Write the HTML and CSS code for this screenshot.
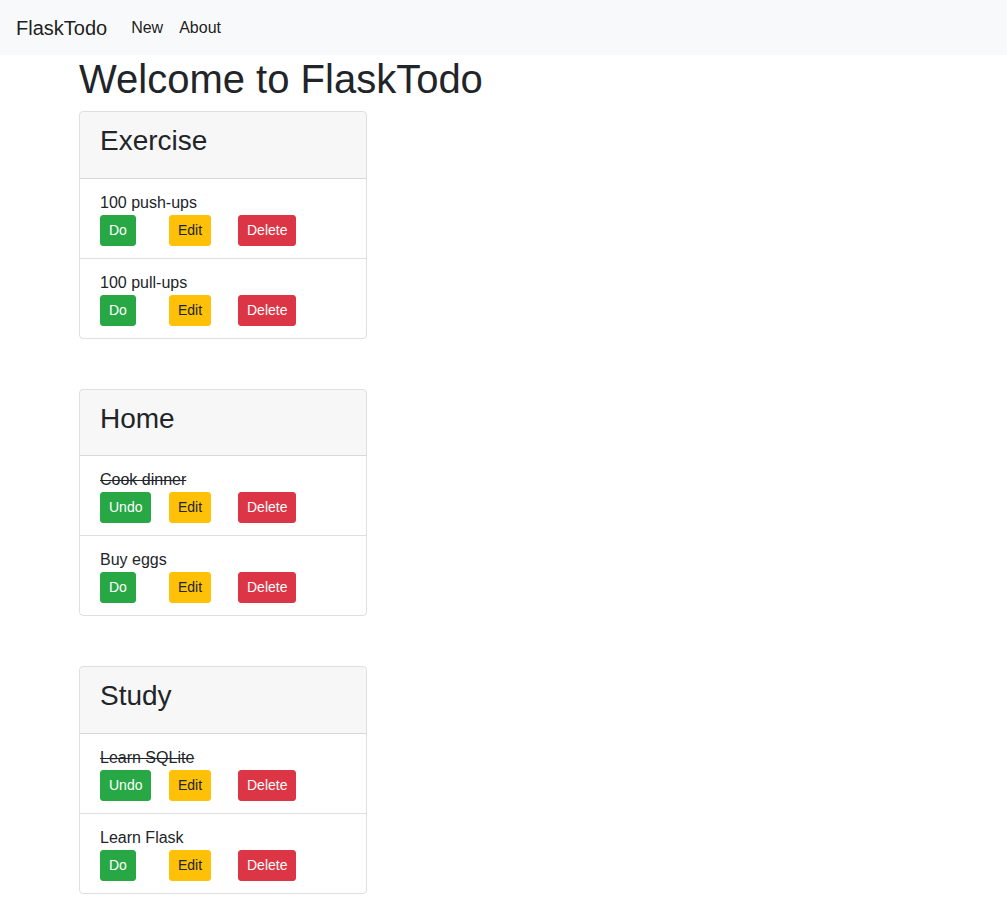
FILE: index.html
```html
<!DOCTYPE html>
<html lang="en">
<head>
<meta charset="utf-8">
<title>FlaskTodo</title>
<link rel="stylesheet" href="styles.css">
</head>
<body>
<nav class="navbar">
  <a class="brand" href="#">FlaskTodo</a>
  <a class="nav-link" href="#">New</a>
  <a class="nav-link" href="#">About</a>
</nav>
<main class="content">
  <h1 class="title">Welcome to FlaskTodo</h1>

  <section class="card">
    <div class="card-header"><h3>Exercise</h3></div>
    <ul class="list">
      <li class="item">
        <div class="task">100 push-ups</div>
        <div class="actions">
          <span class="slot"><button class="btn btn-success">Do</button></span>
          <span class="slot"><button class="btn btn-warning">Edit</button></span>
          <span class="slot"><button class="btn btn-danger">Delete</button></span>
        </div>
      </li>
      <li class="item">
        <div class="task">100 pull-ups</div>
        <div class="actions">
          <span class="slot"><button class="btn btn-success">Do</button></span>
          <span class="slot"><button class="btn btn-warning">Edit</button></span>
          <span class="slot"><button class="btn btn-danger">Delete</button></span>
        </div>
      </li>
    </ul>
  </section>

  <section class="card">
    <div class="card-header"><h3>Home</h3></div>
    <ul class="list">
      <li class="item">
        <div class="task"><s>Cook dinner</s></div>
        <div class="actions">
          <span class="slot"><button class="btn btn-success">Undo</button></span>
          <span class="slot"><button class="btn btn-warning">Edit</button></span>
          <span class="slot"><button class="btn btn-danger">Delete</button></span>
        </div>
      </li>
      <li class="item">
        <div class="task">Buy eggs</div>
        <div class="actions">
          <span class="slot"><button class="btn btn-success">Do</button></span>
          <span class="slot"><button class="btn btn-warning">Edit</button></span>
          <span class="slot"><button class="btn btn-danger">Delete</button></span>
        </div>
      </li>
    </ul>
  </section>

  <section class="card">
    <div class="card-header"><h3>Study</h3></div>
    <ul class="list">
      <li class="item">
        <div class="task"><s>Learn SQLite</s></div>
        <div class="actions">
          <span class="slot"><button class="btn btn-success">Undo</button></span>
          <span class="slot"><button class="btn btn-warning">Edit</button></span>
          <span class="slot"><button class="btn btn-danger">Delete</button></span>
        </div>
      </li>
      <li class="item">
        <div class="task">Learn Flask</div>
        <div class="actions">
          <span class="slot"><button class="btn btn-success">Do</button></span>
          <span class="slot"><button class="btn btn-warning">Edit</button></span>
          <span class="slot"><button class="btn btn-danger">Delete</button></span>
        </div>
      </li>
    </ul>
  </section>
</main>
</body>
</html>
```

FILE: styles.css
```css
* { box-sizing: border-box; }
html, body {
  margin: 0;
  padding: 0;
  background: #fff;
  color: #212529;
  font-family: "Liberation Sans", Arial, Helvetica, sans-serif;
  font-size: 16px;
  line-height: 1.5;
}
a { text-decoration: none; }

.navbar {
  display: flex;
  align-items: center;
  height: 55px;
  padding: 0 16px;
  background: #f8f9fa;
}
.brand {
  font-size: 20px;
  line-height: 30px;
  color: rgba(0,0,0,.9);
  margin-right: 16px;
}
.nav-link {
  padding: 0 8px;
  color: rgba(0,0,0,.9);
  font-size: 16px;
  line-height: 24px;
}

.content {
  padding-left: 79px;
  padding-bottom: 20px;
}
.title {
  margin: 0 0 8px 0;
  font-size: 40px;
  line-height: 48px;
  font-weight: 400;
}

.card {
  width: 288px;
  border: 1px solid rgba(0,0,0,.125);
  border-radius: 4px;
  margin-bottom: 50px;
  overflow: hidden;
}
.card-header {
  background: rgba(0,0,0,.03);
  padding: 12px 20px;
  border-bottom: 1px solid rgba(0,0,0,.125);
}
.card-header h3 {
  margin: 0 0 8px 0;
  font-size: 28px;
  line-height: 33.6px;
  font-weight: 400;
}
.list {
  list-style: none;
  margin: 0;
  padding: 0;
}
.item {
  padding: 12px 20px;
  border-top: 1px solid rgba(0,0,0,.125);
}
.item:first-child { border-top: 0; }
.task s { text-decoration: line-through; }

.actions {
  display: flex;
}
.slot {
  width: 69px;
  display: block;
}
.btn {
  display: inline-block;
  font-family: inherit;
  font-size: 14px;
  line-height: 21px;
  padding: 4px 8px;
  border: 1px solid transparent;
  border-radius: 3px;
  cursor: pointer;
  vertical-align: top;
}
.btn-success { background: #28a745; border-color: #28a745; color: #fff; }
.btn-warning { background: #ffc107; border-color: #ffc107; color: #212529; }
.btn-danger { background: #dc3545; border-color: #dc3545; color: #fff; }
```
